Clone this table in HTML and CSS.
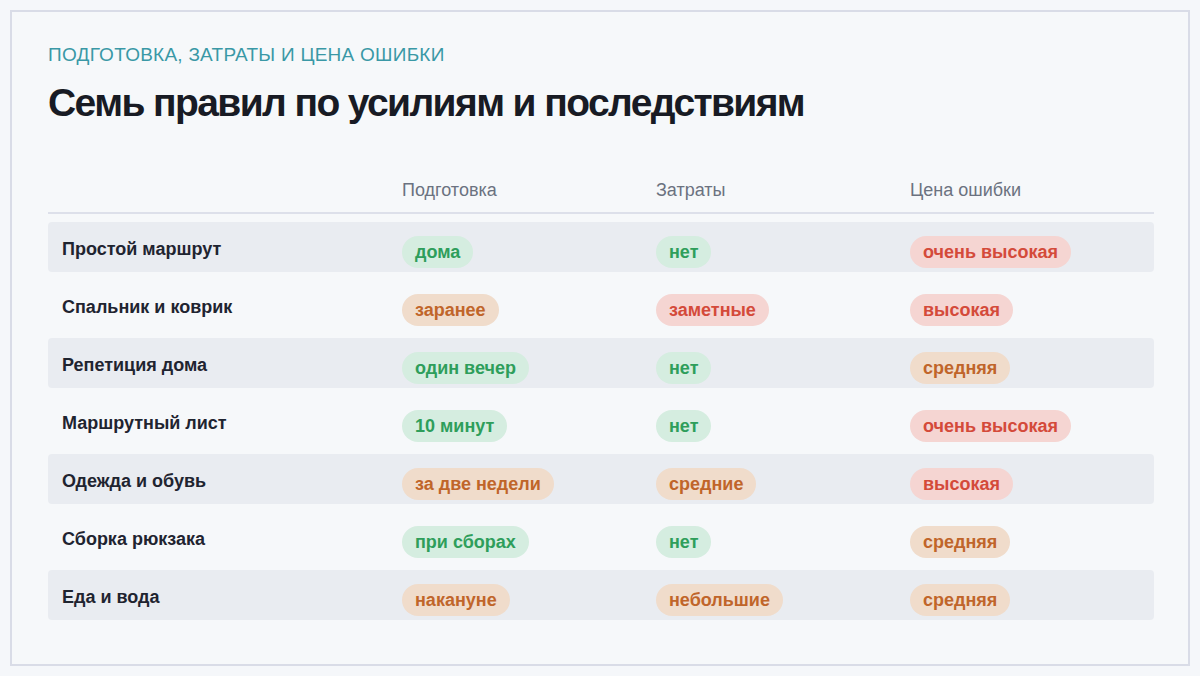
FILE: index.html
```html
<!DOCTYPE html>
<html lang="ru">
<head>
<meta charset="utf-8">
<link rel="stylesheet" href="styles.css">
</head>
<body>
<div class="card">
  <div class="eyebrow">ПОДГОТОВКА, ЗАТРАТЫ И ЦЕНА ОШИБКИ</div>
  <h1 class="title">Семь правил по усилиям и последствиям</h1>
  <div class="table">
    <div class="head">
      <div class="hcell"></div>
      <div class="hcell">Подготовка</div>
      <div class="hcell">Затраты</div>
      <div class="hcell">Цена ошибки</div>
    </div>
    <div class="row shaded">
      <div class="label">Простой маршрут</div>
      <div class="cell"><span class="pill green">дома</span></div>
      <div class="cell"><span class="pill green">нет</span></div>
      <div class="cell"><span class="pill red">очень высокая</span></div>
    </div>
    <div class="row">
      <div class="label">Спальник и коврик</div>
      <div class="cell"><span class="pill orange">заранее</span></div>
      <div class="cell"><span class="pill red">заметные</span></div>
      <div class="cell"><span class="pill red">высокая</span></div>
    </div>
    <div class="row shaded">
      <div class="label">Репетиция дома</div>
      <div class="cell"><span class="pill green">один вечер</span></div>
      <div class="cell"><span class="pill green">нет</span></div>
      <div class="cell"><span class="pill orange">средняя</span></div>
    </div>
    <div class="row">
      <div class="label">Маршрутный лист</div>
      <div class="cell"><span class="pill green">10 минут</span></div>
      <div class="cell"><span class="pill green">нет</span></div>
      <div class="cell"><span class="pill red">очень высокая</span></div>
    </div>
    <div class="row shaded">
      <div class="label">Одежда и обувь</div>
      <div class="cell"><span class="pill orange">за две недели</span></div>
      <div class="cell"><span class="pill orange">средние</span></div>
      <div class="cell"><span class="pill red">высокая</span></div>
    </div>
    <div class="row">
      <div class="label">Сборка рюкзака</div>
      <div class="cell"><span class="pill green">при сборах</span></div>
      <div class="cell"><span class="pill green">нет</span></div>
      <div class="cell"><span class="pill orange">средняя</span></div>
    </div>
    <div class="row shaded">
      <div class="label">Еда и вода</div>
      <div class="cell"><span class="pill orange">накануне</span></div>
      <div class="cell"><span class="pill orange">небольшие</span></div>
      <div class="cell"><span class="pill orange">средняя</span></div>
    </div>
  </div>
</div>
</body>
</html>
```

FILE: styles.css
```css
* { box-sizing: border-box; }
html, body {
  margin: 0;
  padding: 0;
  background: #f5f7fa;
  font-family: "Liberation Sans", Arial, sans-serif;
}
body {
  padding: 10px;
  width: 1200px;
  height: 676px;
}
.card {
  width: 1180px;
  height: 656px;
  border: 2px solid #d9dce7;
  background: #f6f8fa;
  padding: 30px 34px 0 36px;
}
.eyebrow {
  color: #3a98a6;
  font-size: 19px;
  line-height: 26px;
  letter-spacing: 0.25px;
}
.title {
  margin: 10px 0 0 0;
  font-size: 39px;
  line-height: 50px;
  font-weight: bold;
  color: #181b24;
  letter-spacing: -1.6px;
}
.table {
  margin-top: 40px;
  display: flex;
  flex-direction: column;
  gap: 8px;
}
.head, .row {
  display: grid;
  grid-template-columns: 340px 254px 254px 1fr;
  align-items: center;
}
.head {
  height: 46px;
  border-bottom: 2px solid #dde0ea;
  padding-bottom: 0;
}
.hcell {
  padding-left: 14px;
  color: #6b7280;
  font-size: 18px;
}
.row {
  height: 50px;
  border-radius: 4px;
}
.row.shaded { background: #e9ecf1; }
.label {
  padding-left: 14px;
  padding-top: 4px;
  font-weight: bold;
  font-size: 18px;
  color: #1f2430;
}
.cell {
  padding-left: 14px;
  padding-top: 10px;
}
.pill {
  display: inline-block;
  height: 32px;
  line-height: 32px;
  padding: 0 13px;
  border-radius: 16px;
  font-weight: bold;
  font-size: 18px;
}
.green { background: #d5ede0; color: #2e9e5b; }
.orange { background: #f0dccb; color: #c0652a; }
.red { background: #f5d5d2; color: #d44a3a; }
```
